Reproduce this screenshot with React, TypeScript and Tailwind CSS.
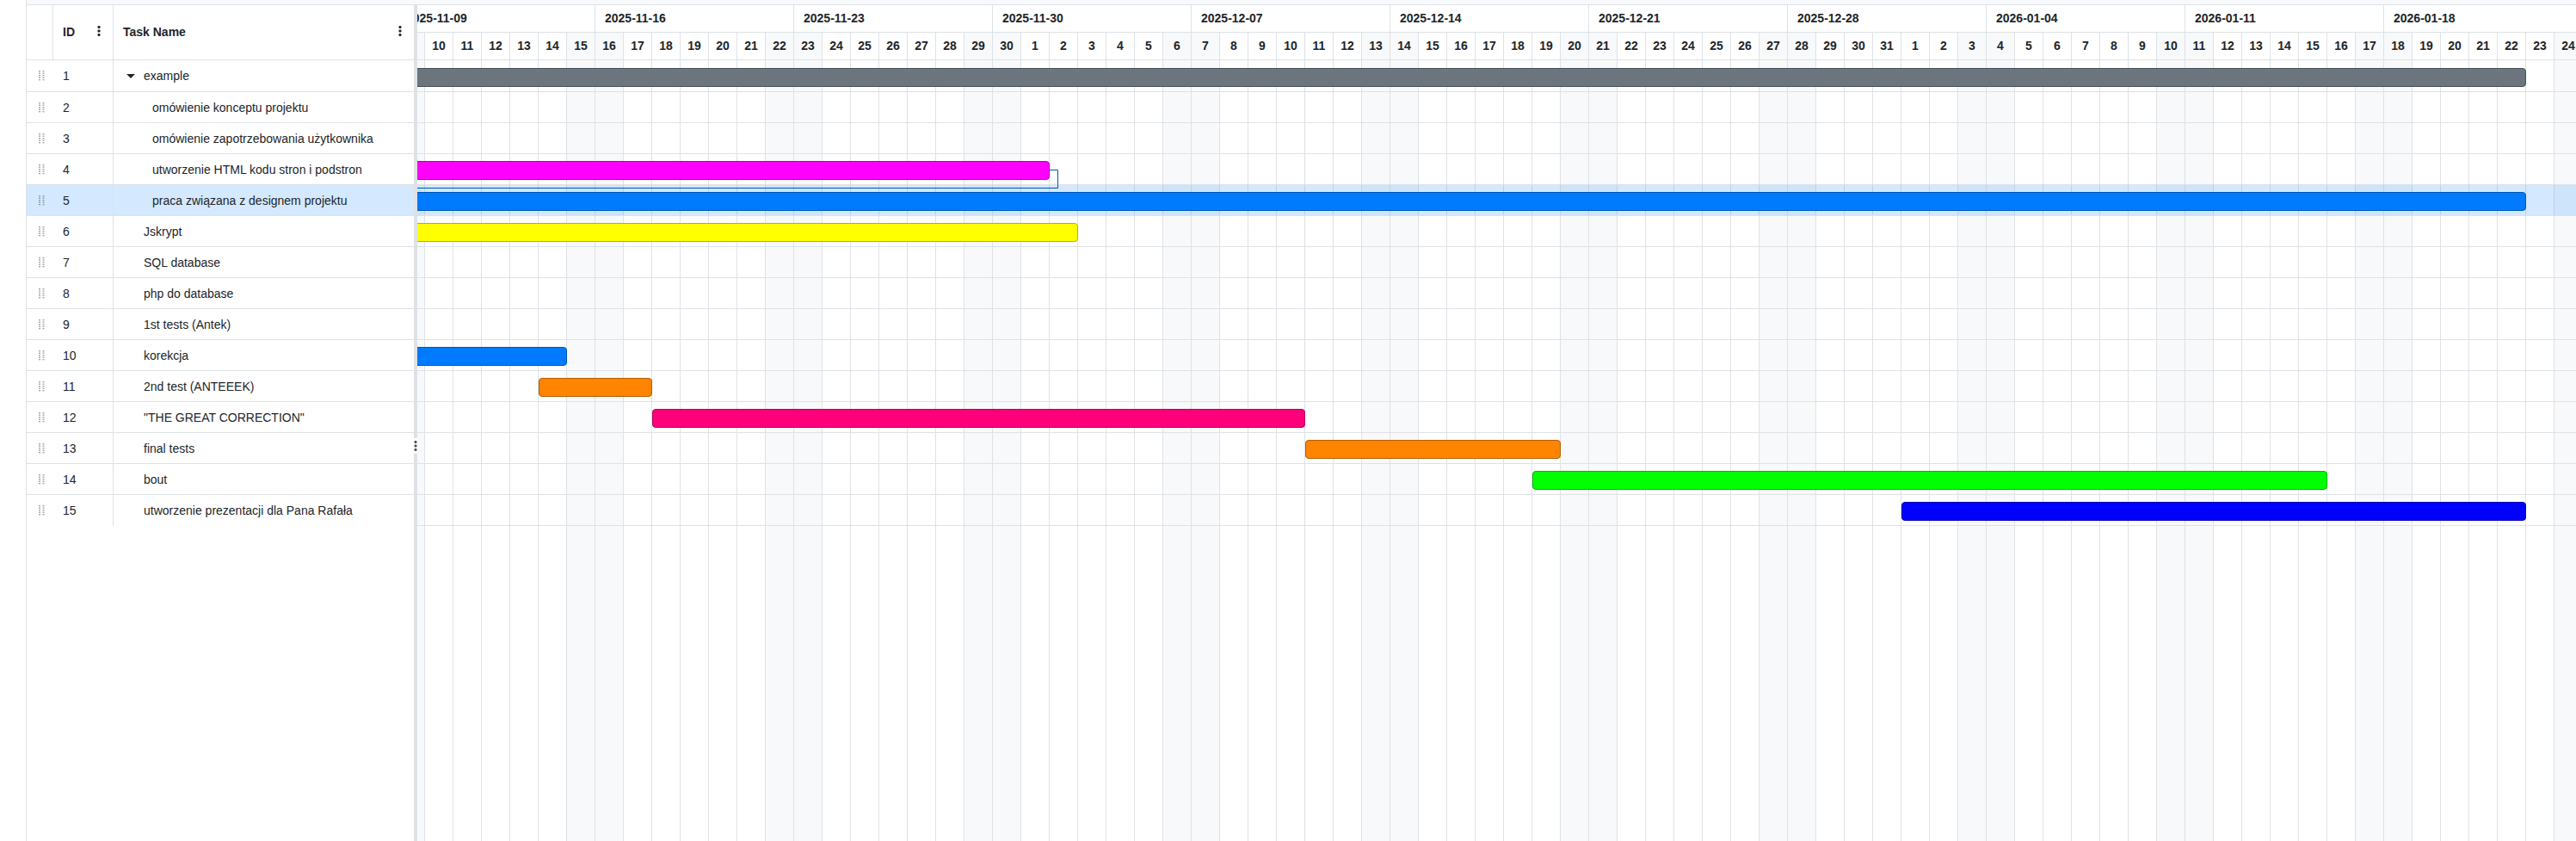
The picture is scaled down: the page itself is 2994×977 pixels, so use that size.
const DAY = 33;
const MS_PER_DAY = 86400000;
const FIRST_DAY = Date.UTC(2025, 10, 9);
const DAY_COUNT = 77;

type Task = {
  id: number;
  name: string;
  level: 0 | 1;
  parent?: boolean;
  selected?: boolean;
  bar?: { from: number; to: number; tone: string };
};

const tasks: Task[] = [
  { id: 1, name: 'example', level: 0, parent: true, bar: { from: -1, to: 75, tone: 'bg-[#6c757d] border-[#495057]' } },
  { id: 2, name: 'omówienie konceptu projektu', level: 1 },
  { id: 3, name: 'omówienie zapotrzebowania użytkownika', level: 1 },
  { id: 4, name: 'utworzenie HTML kodu stron i podstron', level: 1, bar: { from: -1, to: 23, tone: 'bg-[#ff00ff] border-[#b300b3]' } },
  { id: 5, name: 'praca związana z designem projektu', level: 1, selected: true, bar: { from: -1, to: 75, tone: 'bg-[#007bff] border-[#0056b3]' } },
  { id: 6, name: 'Jskrypt', level: 0, bar: { from: -1, to: 24, tone: 'bg-[#ffff00] border-[#b3b300]' } },
  { id: 7, name: 'SQL database', level: 0 },
  { id: 8, name: 'php do database', level: 0 },
  { id: 9, name: '1st tests (Antek)', level: 0 },
  { id: 10, name: 'korekcja', level: 0, bar: { from: -1, to: 6, tone: 'bg-[#007bff] border-[#0056b3]' } },
  { id: 11, name: '2nd test (ANTEEEK)', level: 0, bar: { from: 5, to: 9, tone: 'bg-[#ff8400] border-[#b35c00]' } },
  { id: 12, name: '"THE GREAT CORRECTION"', level: 0, bar: { from: 9, to: 32, tone: 'bg-[#ff007b] border-[#b30056]' } },
  { id: 13, name: 'final tests', level: 0, bar: { from: 32, to: 41, tone: 'bg-[#ff8400] border-[#b35c00]' } },
  { id: 14, name: 'bout', level: 0, bar: { from: 40, to: 68, tone: 'bg-[#00ff00] border-[#00b300]' } },
  { id: 15, name: 'utworzenie prezentacji dla Pana Rafała', level: 0, bar: { from: 53, to: 75, tone: 'bg-[#0000ff] border-[#0000b3]' } },
];

const days = Array.from({ length: DAY_COUNT }, (_, i) => {
  const date = new Date(FIRST_DAY + i * MS_PER_DAY);
  const weekday = date.getUTCDay();
  return { key: date.toISOString().slice(0, 10), label: date.getUTCDate(), weekend: weekday === 0 || weekday === 6 };
});
const weeks = days.filter((_, i) => i % 7 === 0).map((d) => d.key);

function DotsIcon() {
  return (
    <svg width="4" height="12" viewBox="0 0 4 12" fill="currentColor" aria-hidden="true">
      <rect x="0.5" y="0" width="3" height="3" rx="1" />
      <rect x="0.5" y="4.500" width="3" height="3" rx="1" />
      <rect x="0.5" y="9" width="3" height="3" rx="1" />
    </svg>
  );
}

function DragIcon() {
  return (
    <svg width="7" height="12" viewBox="0 0 7 12" fill="currentColor" aria-hidden="true">
      {[0, 2.5, 5, 7.5, 10].map((y) => (
        <g key={y}>
          <rect x="0" y={y} width="2" height="1.4" />
          <rect x="4.5" y={y} width="2" height="1.4" />
        </g>
      ))}
    </svg>
  );
}

function HeaderCell({ label }: { label: string }) {
  return (
    <div className="flex h-6 items-center justify-between pl-[11px] pr-3">
      <span>{label}</span>
      <button type="button" aria-label={`${label} column menu`} className="flex h-[22px] w-2 items-center justify-center self-start">
        <DotsIcon />
      </button>
    </div>
  );
}

function TaskTable() {
  return (
    <table className="w-[450px] shrink-0 table-fixed self-start border-separate border-spacing-0">
      <colgroup>
        <col className="w-[31px]" />
        <col className="w-[70px]" />
        <col />
      </colgroup>
      <thead>
        <tr className="h-16 text-left">
          <th className="border-r border-b border-[#dee2e6] p-0" aria-label="Reorder" />
          <th className="border-r border-b border-[#dee2e6] p-0 pb-px"><HeaderCell label="ID" /></th>
          <th className="border-b border-[#dee2e6] p-0 pb-px"><HeaderCell label="Task Name" /></th>
        </tr>
      </thead>
      <tbody className="[&>tr:last-child>td]:border-b-0">
        {tasks.map((task, i) => (
          <tr key={task.id} className={`${i === 0 ? 'h-[37px]' : 'h-9'} ${task.selected ? 'bg-[#d4e9ff]' : ''}`}>
            <td className="border-b border-[#dee2e6] p-0">
              <button type="button" aria-label={`Move ${task.name}`} className="ml-[14px] block text-[#212529]/40">
                <DragIcon />
              </button>
            </td>
            <td className="border-r border-b border-[#dee2e6] p-0 pl-[11px]">{task.id}</td>
            <td className="border-b border-[#dee2e6] p-0">
              <div className={`flex items-center whitespace-nowrap ${task.level === 1 ? 'pl-[45px]' : task.parent ? 'pl-[15px]' : 'pl-[35px]'}`}>
                {task.parent && (
                  <button type="button" aria-label={`Collapse ${task.name}`} className="w-5">
                    <svg width="10" height="5" viewBox="0 0 10 5" fill="currentColor" aria-hidden="true">
                      <path d="M0 0h10L5 5z" />
                    </svg>
                  </button>
                )}
                <span>{task.name}</span>
              </div>
            </td>
          </tr>
        ))}
      </tbody>
    </table>
  );
}

function Timeline() {
  return (
    <div className="flex min-w-0 flex-1 overflow-hidden">
      <div className="-ml-6 flex shrink-0 flex-col">
        <div className="flex h-8 border-b border-[#dee2e6] font-bold leading-[30px]">
          {weeks.map((week) => (
            <div key={week} className="w-[231px] border-r border-[#dee2e6] pl-[11px]">{week}</div>
          ))}
        </div>
        <div className="grid flex-1">
          <div className="col-start-1 row-start-1 flex">
            {days.map((day) => (
              <div key={day.key} className={`w-[33px] border-r border-[#dee2e6] text-center font-bold leading-[30px] ${day.weekend ? 'bg-[#f8f9fa]' : ''}`}>
                {day.label}
              </div>
            ))}
          </div>
          <div className="relative col-start-1 row-start-1">
            <div className="h-8 border-b border-[#dee2e6]" />
            {tasks.map((task, i) => (
              <div
                key={task.id}
                className={`flex items-end border-b border-[#dee2e6] bg-clip-padding pb-[5px] ${i === 0 ? 'h-[37px]' : 'h-9'} ${task.selected ? 'bg-[#007bff]/17' : ''}`}
              >
                {task.bar && (
                  <div
                    className={`h-[22px] rounded-[4px] border ${task.bar.tone}`}
                    style={{ marginLeft: task.bar.from * DAY, width: (task.bar.to - task.bar.from) * DAY }}
                  />
                )}
              </div>
            ))}
            <svg className="absolute top-[159px] left-0 text-[#0056b3]" width="769" height="22" fill="none" stroke="currentColor" aria-hidden="true">
              <path d="M759 .5h9.500v21H0" />
            </svg>
          </div>
        </div>
      </div>
    </div>
  );
}

export default function App() {
  return (
    <main className="flex h-screen flex-col overflow-hidden bg-white pl-[30px] font-['Liberation_Sans',Arial,sans-serif] text-sm text-[#212529]">
      <div className="flex min-h-0 flex-1 flex-col border-l border-[#dee2e6]">
        <div className="h-[6px] shrink-0 border-b border-[#dee2e6] bg-[#f8f9fa]" />
        <div className="flex min-h-0 flex-1">
          <TaskTable />
          <div className="flex w-1 shrink-0 flex-col bg-[#dee2e6]" role="separator" aria-orientation="vertical">
            <div className="mt-[503px] flex h-[18px] items-center justify-center bg-white text-[#495057]">
              <DotsIcon />
            </div>
          </div>
          <Timeline />
        </div>
      </div>
    </main>
  );
}
